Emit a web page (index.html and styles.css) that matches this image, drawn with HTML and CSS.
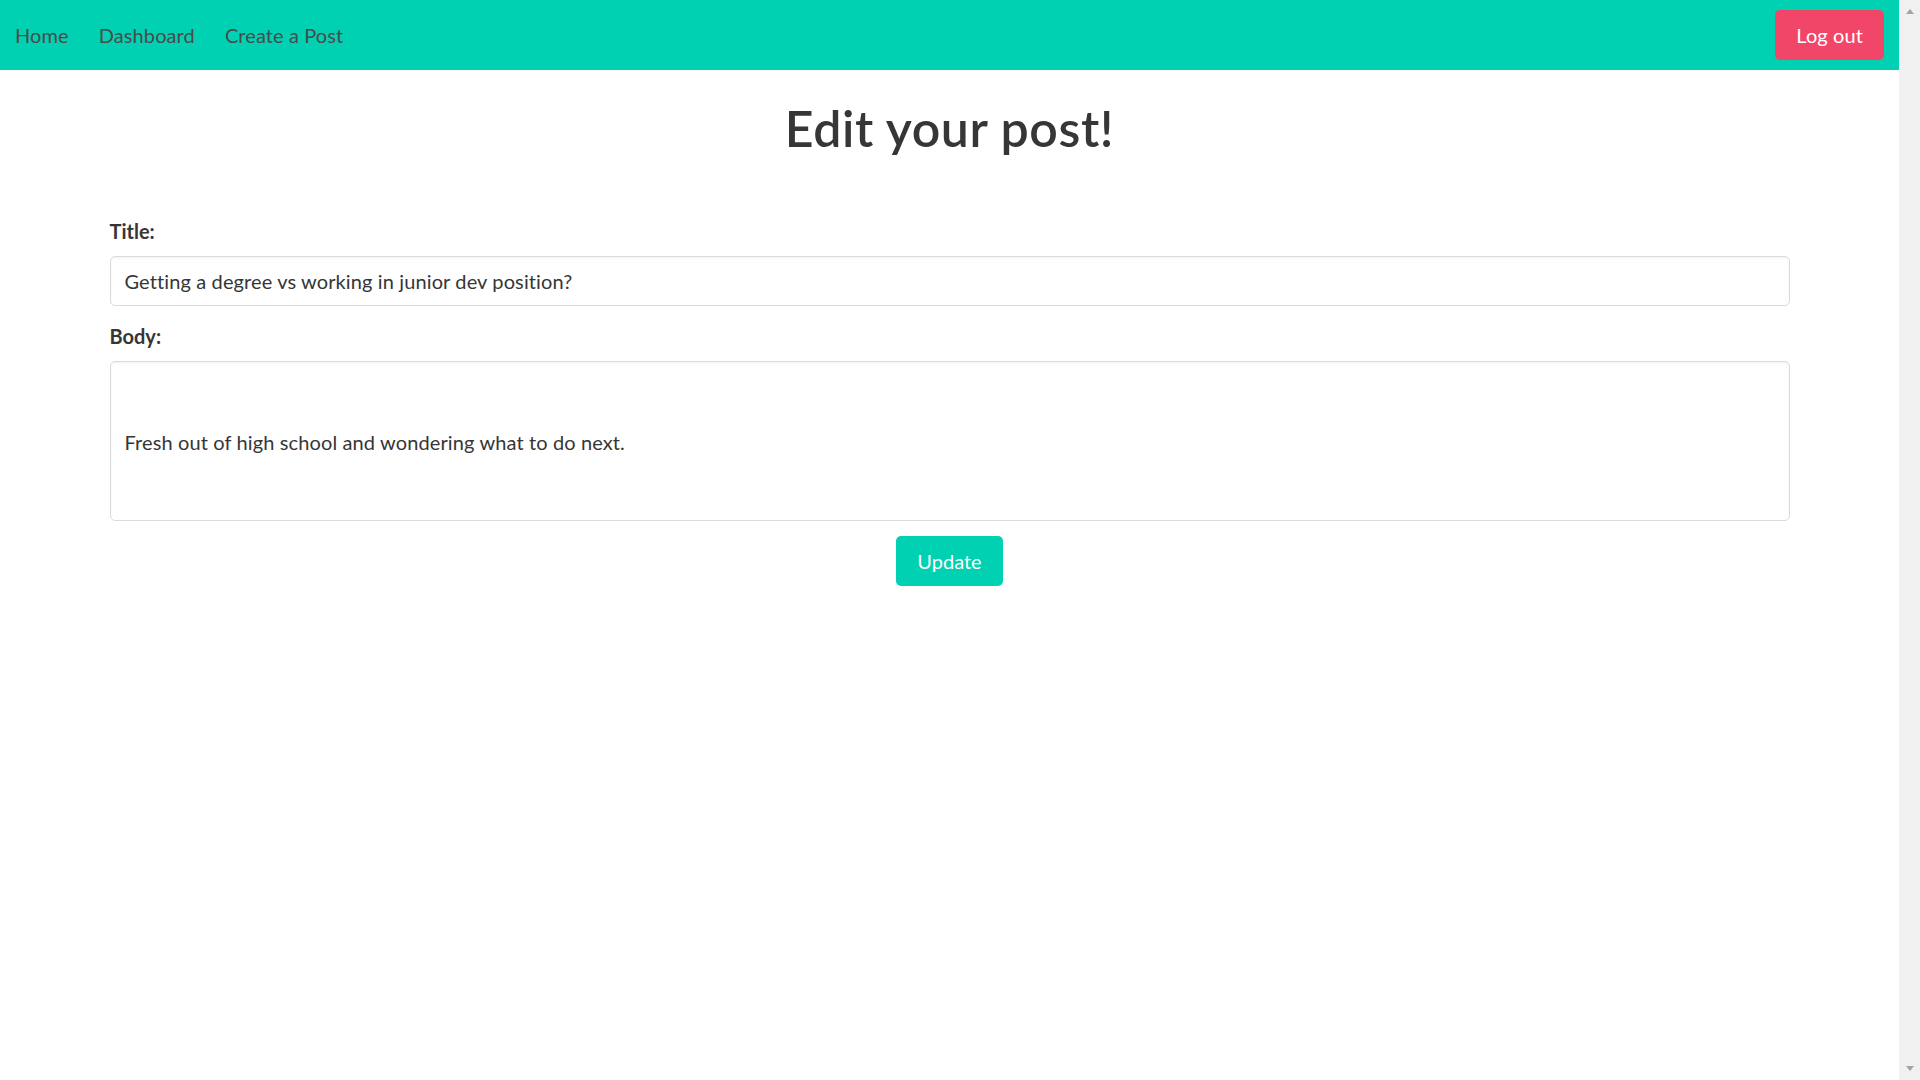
FILE: index.html
```html
<!DOCTYPE html>
<html lang="en">
<head>
<meta charset="utf-8">
<title>Edit your post!</title>
<link rel="stylesheet" href="styles.css">
</head>
<body>
<div class="window">
  <div class="page">
    <nav class="navbar">
      <div class="navbar-start">
        <a class="navbar-item" href="#">Home</a>
        <a class="navbar-item" href="#">Dashboard</a>
        <a class="navbar-item" href="#">Create a Post</a>
      </div>
      <div class="navbar-end">
        <div class="navbar-item">
          <a class="button is-danger" href="#">Log out</a>
        </div>
      </div>
    </nav>
    <main class="container">
      <h1 class="title">Edit your post!</h1>
      <form class="form">
        <div class="field">
          <label class="label" for="title">Title:</label>
          <input class="input" id="title" type="text" value="Getting a degree vs working in junior dev position?">
        </div>
        <div class="field">
          <label class="label" for="body">Body:</label>
          <textarea class="textarea" id="body">Fresh out of high school and wondering what to do next.</textarea>
        </div>
        <div class="field actions">
          <button class="button is-primary" type="button">Update</button>
        </div>
      </form>
    </main>
  </div>
  <div class="scrollbar">
    <span class="arrow up"></span>
    <span class="arrow down"></span>
  </div>
</div>
</body>
</html>
```
FILE: styles.css
```css
* { box-sizing: border-box; }
html, body { margin: 0; padding: 0; height: 100%; }
body {
  font-family: "Lato", "Open Sans", sans-serif;
  font-size: 20px;
  line-height: 1.5;
  color: #4a4a4a;
  background: #fff;
}
.window { display: flex; height: 100vh; overflow: hidden; }
.page { flex: 1; min-width: 0; }

.scrollbar {
  width: 21px;
  flex: none;
  background: #f0f0f0;
  display: flex;
  flex-direction: column;
  justify-content: space-between;
  align-items: center;
  padding: 9px 0;
}
.arrow { width: 0; height: 0; border-left: 4.5px solid transparent; border-right: 4.5px solid transparent; }
.arrow.up { border-bottom: 5px solid #a3a3a3; }
.arrow.down { border-top: 5px solid #a3a3a3; }

.navbar {
  height: 70px;
  background: #00d1b2;
  display: flex;
  justify-content: space-between;
  align-items: stretch;
}
.navbar-start, .navbar-end { display: flex; align-items: stretch; }
.navbar-item {
  display: flex;
  align-items: center;
  padding: 10px 15px;
  color: #4a4a4a;
  text-decoration: none;
  letter-spacing: 0.1px;
}

.button {
  display: inline-flex;
  align-items: center;
  justify-content: center;
  height: 50px;
  padding: 0 20px;
  border: 1px solid transparent;
  border-radius: 5px;
  font-family: inherit;
  font-size: 20px;
  line-height: 1.5;
  color: #fff;
  text-decoration: none;
  cursor: pointer;
}
.is-danger { background: #f14668; }
.is-primary { background: #00d1b2; }

.container { width: 1680px; margin: 0 auto; padding-top: 30px; }
.title {
  margin: 0 0 60px;
  text-align: center;
  font-size: 50px;
  font-weight: 600;
  line-height: 1.125;
  letter-spacing: 0.6px;
  color: #363636;
}
.field { margin-bottom: 15px; }
.label {
  display: block;
  margin-bottom: 10px;
  font-weight: 700;
  color: #363636;
}
.input, .textarea {
  display: block;
  width: 100%;
  border: 1px solid #dbdbdb;
  border-radius: 5px;
  box-shadow: inset 0 1.25px 2.5px rgba(10, 10, 10, 0.05);
  font-family: inherit;
  font-size: 20px;
  line-height: 1.5;
  letter-spacing: 0.12px;
  color: #363636;
  background: #fff;
}
.input { height: 50px; padding: 0 14px; }
.textarea { height: 160px; padding: 65px 14px 14px; resize: none; overflow: hidden; }
.actions { display: flex; justify-content: center; }
```
